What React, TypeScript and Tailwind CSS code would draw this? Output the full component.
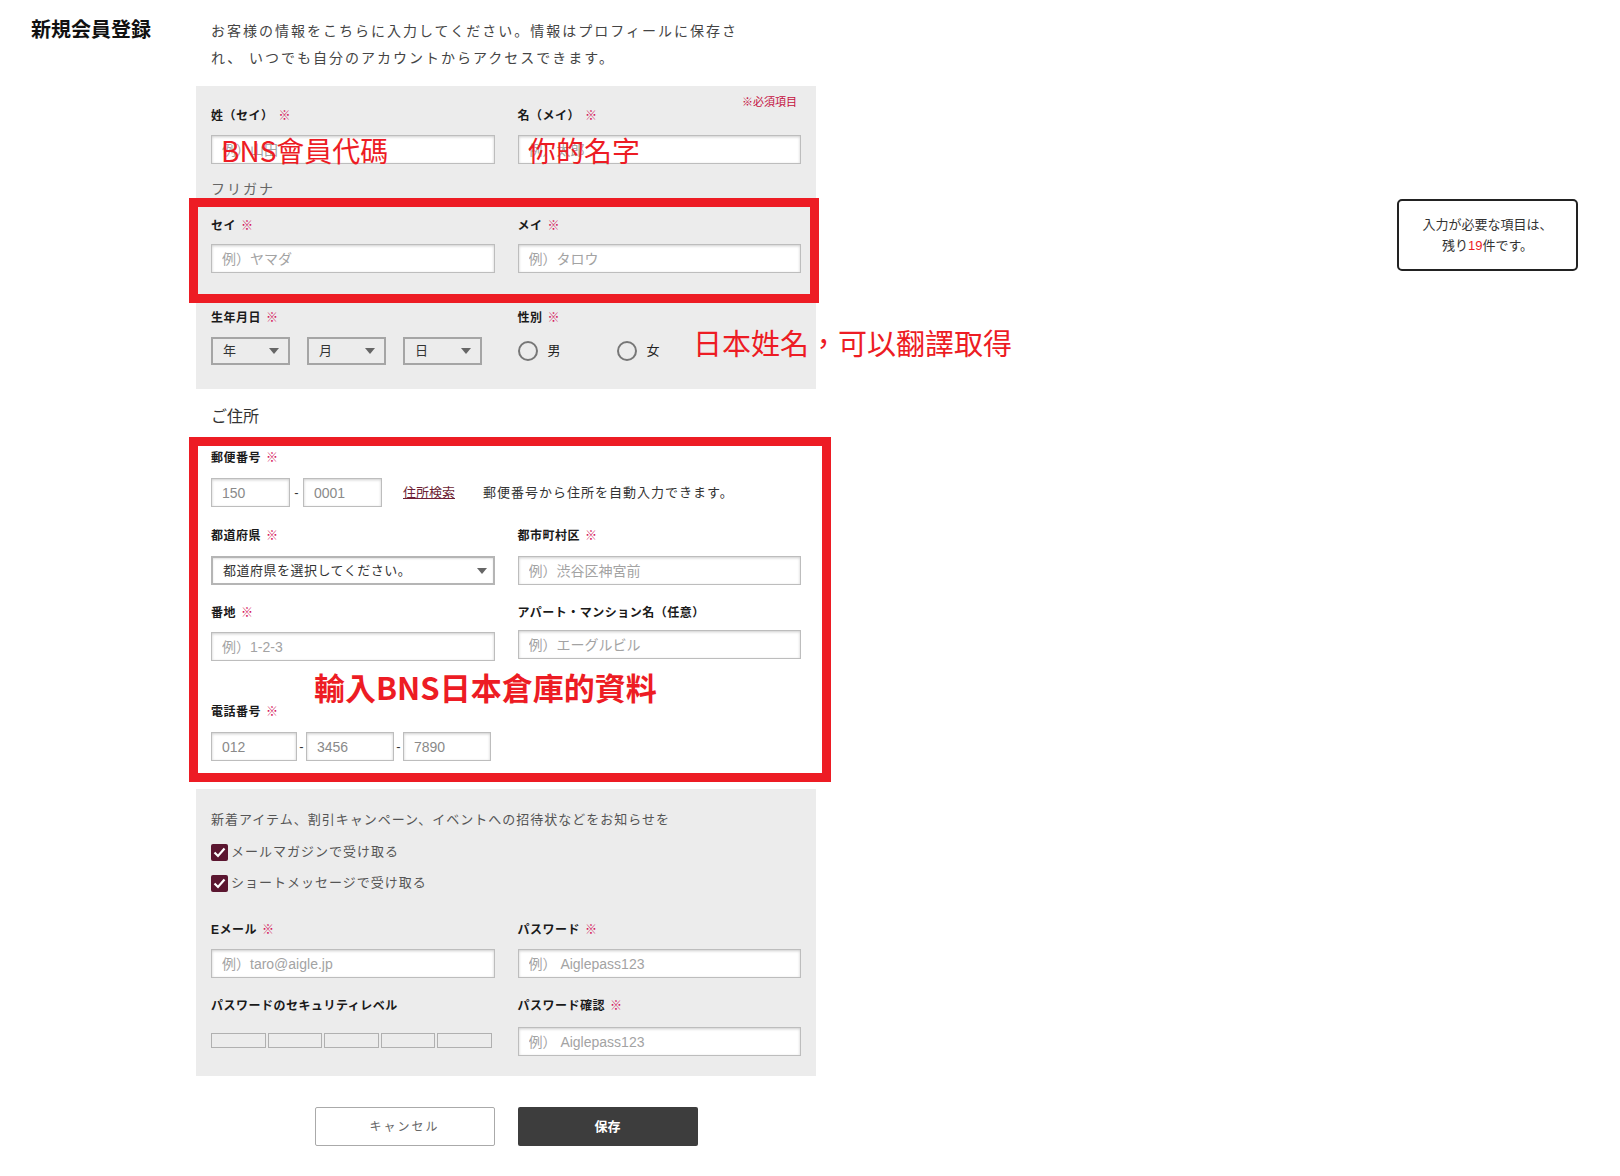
import React from 'react';

const RED = 'text-[#ed1c24]';

function Req() {
  return <span className="ml-[5px] font-normal text-[#d4145a]">※</span>;
}

function Label({ text, required = true }: { text: string; required?: boolean }) {
  return (
    <div className="h-[18px] whitespace-nowrap text-[12px] leading-[18px] font-bold tracking-[0.5px] text-[#1a1a1a]">
      {text}
      {required && <Req />}
    </div>
  );
}

function Field({ placeholder, value, className = '' }: { placeholder?: string; value?: string; className?: string }) {
  return (
    <input
      readOnly
      value={value}
      placeholder={placeholder}
      className={`h-[29px] min-w-0 border border-[#bdbdbd] bg-white px-[10px] text-[14px] text-[#8a8a8a] shadow-[inset_0_1px_3px_rgba(0,0,0,0.2)] outline-none placeholder:text-[#a3a3a3] ${className}`}
    />
  );
}

function Caret() {
  return (
    <svg width="10" height="6" viewBox="0 0 10 6" className="shrink-0">
      <path d="M0 0 H10 L5 6 Z" fill="#666" />
    </svg>
  );
}

function MiniSelect({ label }: { label: string }) {
  return (
    <div className="flex h-[28px] w-[79px] items-center justify-between border-2 border-[#a5a5a5] bg-[#ececec] pl-[10px] pr-[9px] text-[13px] text-[#333]">
      <span>{label}</span>
      <Caret />
    </div>
  );
}

function Radio({ label }: { label: string }) {
  return (
    <div className="flex items-center gap-[10px]">
      <span className="h-[20px] w-[20px] rounded-full border-2 border-[#777]" />
      <span className="text-[13px] text-[#222]">{label}</span>
    </div>
  );
}

function Check({ label }: { label: string }) {
  return (
    <div className="flex h-[22px] items-center gap-[3px]">
      <span className="flex h-[17px] w-[17px] items-center justify-center rounded-[2px] bg-[#5b1630]">
        <svg width="13" height="11" viewBox="0 0 13 11">
          <path d="M1.5 5.5 L5 9 L11.5 1.5" fill="none" stroke="#fff" strokeWidth="2.2" />
        </svg>
      </span>
      <span className="text-[13px] tracking-[1px] text-[#555]">{label}</span>
    </div>
  );
}

export default function App() {
  return (
    <div className="min-h-[1176px] w-[1620px] bg-white font-[Liberation_Sans,Noto_Sans_CJK_JP,sans-serif]">
      <div className="flex">
        {/* Title */}
        <div className="w-[196px] shrink-0 pl-[31px] pt-[16px]">
          <h1 className="text-[20px] leading-[28px] font-bold text-[#111]">新規会員登録</h1>
        </div>

        {/* Main form */}
        <div className="relative w-[620px] shrink-0">
          <p className="w-[550px] pl-[15px] pt-[18px] text-[14px] leading-[27px] tracking-[2px] text-[#444]">
            お客様の情報をこちらに入力してください。情報はプロフィールに保存され、 いつでも自分のアカウントからアクセスできます。
          </p>

          {/* Name panel */}
          <div className="relative mt-[14px] bg-[#ececec] px-[15px] pt-[21px] pb-[24px]">
            <span className="absolute top-[8px] right-[19px] text-[11px] leading-[16px] text-[#c4103f]">※必須項目</span>
            <div className="grid grid-cols-2 gap-x-[23px]">
              <div>
                <Label text="姓（セイ）" />
                <Field className="mt-[10px] w-full" placeholder="例）山田" />
              </div>
              <div>
                <Label text="名（メイ）" />
                <Field className="mt-[10px] w-full" placeholder="例）太郎" />
              </div>
            </div>
            <div className="mt-[15px] h-[20px] text-[14px] leading-[20px] tracking-[2px] text-[#666]">フリガナ</div>
            <div className="mt-[18px] grid grid-cols-2 gap-x-[23px]">
              <div>
                <Label text="セイ" />
                <Field className="mt-[9px] w-full" placeholder="例）ヤマダ" />
              </div>
              <div>
                <Label text="メイ" />
                <Field className="mt-[9px] w-full" placeholder="例）タロウ" />
              </div>
            </div>
            <div className="mt-[36px] grid grid-cols-2 gap-x-[23px]">
              <div>
                <Label text="生年月日" />
                <div className="mt-[10px] flex gap-[17px]">
                  <MiniSelect label="年" />
                  <MiniSelect label="月" />
                  <MiniSelect label="日" />
                </div>
              </div>
              <div>
                <Label text="性別" />
                <div className="mt-[10px] flex h-[28px] items-center gap-[56px]">
                  <Radio label="男" />
                  <Radio label="女" />
                </div>
              </div>
            </div>
          </div>

          {/* Address */}
          <div className="mt-[16px] h-[24px] pl-[15px] text-[16px] leading-[24px] text-[#333]">ご住所</div>
          <div className="px-[15px]">
            <div className="mt-[20px]">
              <Label text="郵便番号" />
            </div>
            <div className="mt-[11px] flex h-[29px] items-center">
              <Field className="w-[79px]" value="150" />
              <span className="w-[13px] text-center text-[13px] text-[#333]">-</span>
              <Field className="w-[79px]" value="0001" />
              <a className="ml-[21px] text-[13px] text-[#6d1f35] underline">住所検索</a>
              <span className="ml-[28px] text-[13px] tracking-[1px] text-[#333]">郵便番号から住所を自動入力できます。</span>
            </div>
            <div className="mt-[20px] grid grid-cols-2 gap-x-[23px]">
              <div>
                <Label text="都道府県" />
                <div className="mt-[11px] flex h-[29px] items-center justify-between border-2 border-[#b5b5b5] bg-white pl-[10px] pr-[6px] text-[13px] tracking-[0.5px] text-[#333] shadow-[inset_0_1px_2px_rgba(0,0,0,0.12)]">
                  <span>都道府県を選択してください。</span>
                  <Caret />
                </div>
              </div>
              <div>
                <Label text="都市町村区" />
                <Field className="mt-[11px] w-full" placeholder="例）渋谷区神宮前" />
              </div>
            </div>
            <div className="mt-[19px] grid grid-cols-2 gap-x-[23px]">
              <div>
                <Label text="番地" />
                <Field className="mt-[10px] w-full" placeholder="例）1-2-3" />
              </div>
              <div>
                <Label text="アパート・マンション名（任意）" required={false} />
                <Field className="mt-[8px] w-full" placeholder="例）エーグルビル" />
              </div>
            </div>
            <div className="mt-[42px]">
              <Label text="電話番号" />
            </div>
            <div className="mt-[11px] flex h-[29px] items-center">
              <Field className="w-[86px]" value="012" />
              <span className="w-[9px] text-center text-[13px] text-[#333]">-</span>
              <Field className="w-[88px]" value="3456" />
              <span className="w-[9px] text-center text-[13px] text-[#333]">-</span>
              <Field className="w-[88px]" value="7890" />
            </div>
          </div>

          {/* Account panel */}
          <div className="mt-[28px] bg-[#ececec] px-[15px] pt-[21px] pb-[20px]">
            <div className="h-[20px] text-[13px] leading-[20px] tracking-[1px] text-[#555]">
              新着アイテム、割引キャンペーン、イベントへの招待状などをお知らせを
            </div>
            <div className="mt-[11px] flex flex-col gap-[9px]">
              <Check label="メールマガジンで受け取る" />
              <Check label="ショートメッセージで受け取る" />
            </div>
            <div className="mt-[27px] grid grid-cols-2 gap-x-[23px]">
              <div>
                <Label text="Eメール" />
                <Field className="mt-[10px] w-full" placeholder="例）taro@aigle.jp" />
              </div>
              <div>
                <Label text="パスワード" />
                <Field className="mt-[10px] w-full" placeholder="例） Aiglepass123" />
              </div>
            </div>
            <div className="mt-[19px] grid grid-cols-2 gap-x-[23px]">
              <div>
                <Label text="パスワードのセキュリティレベル" required={false} />
                <div className="mt-[18px] flex h-[15px] gap-[2px] pr-[3px]">
                  <span className="flex-1 border border-[#b0b0b0]" />
                  <span className="flex-1 border border-[#b0b0b0]" />
                  <span className="flex-1 border border-[#b0b0b0]" />
                  <span className="flex-1 border border-[#b0b0b0]" />
                  <span className="flex-1 border border-[#b0b0b0]" />
                </div>
              </div>
              <div>
                <Label text="パスワード確認" />
                <Field className="mt-[12px] w-full" placeholder="例） Aiglepass123" />
              </div>
            </div>
          </div>

          {/* Buttons */}
          <div className="mt-[31px] flex justify-center gap-[23px]">
            <button className="h-[39px] w-[180px] rounded-[2px] border border-[#aaa] bg-white text-[12px] tracking-[2px] text-[#666]">
              キャンセル
            </button>
            <button className="h-[39px] w-[180px] rounded-[2px] bg-[#3d3d3d] text-[13px] font-bold text-white">保存</button>
          </div>

          {/* Annotations */}
          <div className="pointer-events-none absolute left-[-7px] top-[198px] h-[105px] w-[630px] border-[9px] border-[#ed1c24]" />
          <div className="pointer-events-none absolute left-[-7px] top-[437px] h-[345px] w-[642px] border-[9px] border-[#ed1c24]" />
          <div lang="zh-TW" className={`absolute left-[25px] top-[133px] whitespace-nowrap font-[Noto_Sans_CJK_TC,sans-serif] text-[28px] leading-[34px] ${RED}`}>
            BNS會員代碼
          </div>
          <div lang="zh-TW" className={`absolute left-[332px] top-[133px] whitespace-nowrap font-[Noto_Sans_CJK_TC,sans-serif] text-[28px] leading-[34px] ${RED}`}>
            你的名字
          </div>
          <div lang="zh-TW" className={`absolute left-[497px] top-[325px] whitespace-nowrap font-[Noto_Sans_CJK_TC,sans-serif] text-[29px] leading-[34px] ${RED}`}>
            日本姓名，可以翻譯取得
          </div>
          <div lang="zh-TW" className={`absolute left-[118px] top-[669px] whitespace-nowrap font-[Noto_Sans_CJK_TC,sans-serif] text-[31px] leading-[36px] font-bold ${RED}`}>
            輸入BNS日本倉庫的資料
          </div>
        </div>

        {/* Side notice */}
        <div className="ml-[581px] mt-[199px] flex h-[72px] w-[181px] shrink-0 flex-col items-center justify-center rounded-[5px] border-2 border-[#222] text-[13px] leading-[21px] text-[#333]">
          <span>入力が必要な項目は、</span>
          <span>
            残り<span className="text-[#ed1c24]">19</span>件です。
          </span>
        </div>
      </div>
    </div>
  );
}
